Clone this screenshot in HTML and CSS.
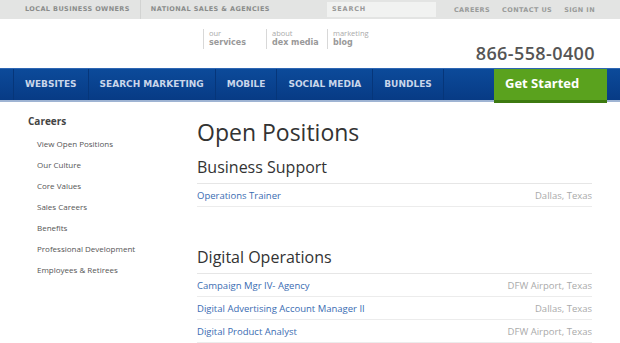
FILE: index.html
```html
<!DOCTYPE html>
<html>
<head>
    <title>Careers - Open Positions</title>
    <link rel="stylesheet" href="styles.css">
</head>
<body>
    <div class="topbar">
        <a class="seg first" href="#">LOCAL BUSINESS OWNERS</a>
        <a class="seg" href="#">NATIONAL SALES &amp; AGENCIES</a>
        <div class="search">SEARCH</div>
        <a class="util careers" href="#">CAREERS</a>
        <a class="util" href="#">CONTACT US</a>
        <a class="util signin" href="#">SIGN IN</a>
    </div>

    <div class="header">
        <div class="sublinks">
            <a class="sub" href="#"><span class="small">our</span><span class="big">services</span></a>
            <a class="sub narrow" href="#"><span class="small">about</span><span class="big">dex media</span></a>
            <a class="sub" href="#"><span class="small">marketing</span><span class="big">blog</span></a>
        </div>
        <div class="phone">866-558-0400</div>
    </div>

    <div class="nav">
        <a class="navitem" href="#">WEBSITES</a>
        <a class="navitem" href="#">SEARCH MARKETING</a>
        <a class="navitem" href="#">MOBILE</a>
        <a class="navitem" href="#">SOCIAL MEDIA</a>
        <a class="navitem last" href="#">BUNDLES</a>
        <a class="getstarted" href="#">Get Started</a>
    </div>

    <div class="page">
        <div class="sidebar">
            <div class="side-title">Careers</div>
            <a class="side-link" href="#">View Open Positions</a>
            <a class="side-link" href="#">Our Culture</a>
            <a class="side-link" href="#">Core Values</a>
            <a class="side-link" href="#">Sales Careers</a>
            <a class="side-link" href="#">Benefits</a>
            <a class="side-link" href="#">Professional Development</a>
            <a class="side-link" href="#">Employees &amp; Retirees</a>
        </div>
        <div class="content">
            <h1>Open Positions</h1>

            <h2>Business Support</h2>
            <div class="jobs">
                <div class="job"><a href="#">Operations Trainer</a><span class="loc">Dallas, Texas</span></div>
            </div>

            <h2 class="spaced">Digital Operations</h2>
            <div class="jobs">
                <div class="job"><a href="#">Campaign Mgr IV- Agency</a><span class="loc">DFW Airport, Texas</span></div>
                <div class="job"><a href="#">Digital Advertising Account Manager II</a><span class="loc">Dallas, Texas</span></div>
                <div class="job"><a href="#">Digital Product Analyst</a><span class="loc">DFW Airport, Texas</span></div>
            </div>
        </div>
    </div>
</body>
</html>
```

FILE: styles.css
```css
body
{
    margin: 0;
    font-family: "Open Sans", "DejaVu Sans", sans-serif;
    background-color: white;
    color: #333;
}
a
{
    text-decoration: none;
}

/* top utility bar */
.topbar
{
    display: flex;
    align-items: center;
    height: 19px;
    background-color: #e3e4e3;
    font-family: "DejaVu Sans", sans-serif;
    font-weight: bold;
    font-size: 6.5px;
    letter-spacing: 0.4px;
    white-space: nowrap;
}
.seg
{
    color: #8a8c8b;
    height: 19px;
    line-height: 19px;
    padding: 0 10px;
    border-left: 1px solid #d2d3d2;
}
.seg.first
{
    border-left: none;
    padding-left: 25px;
}
.search
{
    margin-left: auto;
    width: 104px;
    height: 15px;
    line-height: 15px;
    padding-left: 5px;
    background-color: #f1f2f1;
    color: #999;
    letter-spacing: 0.8px;
}
.util
{
    color: #999b9a;
    margin-left: 12px;
}
.util.careers
{
    margin-left: 18px;
}
.util.signin
{
    margin-right: 25px;
}

/* header */
.header
{
    display: flex;
    justify-content: space-between;
    height: 49px;
    padding: 0 25px 0 203px;
}
.sublinks
{
    display: flex;
    margin-top: 10px;
    height: 20px;
}
.sub
{
    display: flex;
    flex-direction: column;
    border-left: 1px solid #d8d8d8;
    padding-left: 5px;
    width: 57px;
    line-height: 9px;
}
.sub.narrow
{
    width: 55px;
}
.small
{
    font-size: 7.5px;
    color: #aaa;
}
.big
{
    font-family: "DejaVu Sans", sans-serif;
    font-size: 8px;
    font-weight: bold;
    color: #999;
    line-height: 10px;
}
.phone
{
    align-self: flex-end;
    font-size: 18px;
    font-weight: 600;
    letter-spacing: 0.4px;
    color: #555;
    margin-bottom: 3px;
}

/* blue nav */
.nav
{
    display: flex;
    height: 31px;
    background: linear-gradient(#0c4a9a, #073b85);
    border-top: 1px solid #2d66b3;
    border-bottom: 2px solid #9fb4d3;
    padding-left: 13px;
}
.navitem
{
    font-family: "DejaVu Sans", sans-serif;
    font-weight: bold;
    font-size: 9px;
    color: #c9d6ea;
    line-height: 31px;
    padding: 0 11px;
    border-left: 1px solid #06367a;
}
.navitem.last
{
    border-right: 1px solid #06367a;
}
.getstarted
{
    margin-left: auto;
    margin-right: 13px;
    margin-bottom: -3px;
    width: 113px;
    height: 34px;
    box-sizing: border-box;
    padding-left: 11px;
    background-color: #5aa21e;
    border-bottom: 3px solid #3d7a10;
    color: white;
    font-weight: bold;
    font-size: 13px;
    line-height: 29px;
}

/* page body */
.page
{
    display: flex;
    padding: 12px 0 0 28px;
}
.sidebar
{
    width: 169px;
    display: flex;
    flex-direction: column;
}
.side-title
{
    font-weight: bold;
    font-size: 10px;
    color: #444;
    margin-bottom: 10px;
}
.side-link
{
    font-size: 8px;
    color: #555;
    padding-left: 9px;
    height: 21px;
}
.content
{
    width: 395px;
}
h1
{
    margin: 2px 0 0 0;
    font-size: 23px;
    font-weight: normal;
    color: #333;
    line-height: 32px;
}
h2
{
    margin: 8px 0 0 0;
    font-size: 16px;
    font-weight: normal;
    color: #333;
    line-height: 22px;
    padding-bottom: 5px;
    border-bottom: 1px solid #e6e6e6;
}
h2.spaced
{
    margin-top: 39px;
}
.job
{
    display: flex;
    justify-content: space-between;
    height: 20px;
    padding-top: 2px;
    line-height: 20px;
    border-bottom: 1px solid #ececec;
    font-size: 9.5px;
}
.job a
{
    color: #3a6cb2;
}
.loc
{
    color: #aaa;
}
```
